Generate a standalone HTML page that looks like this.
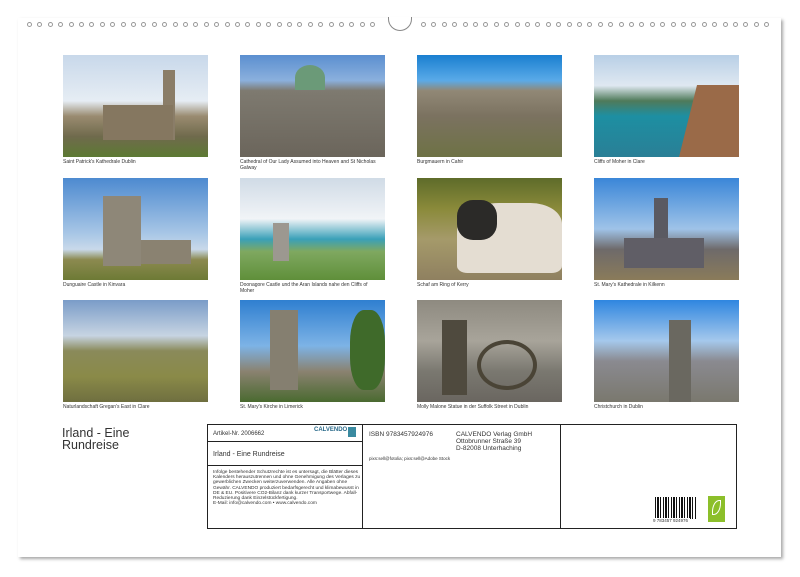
<!DOCTYPE html>
<html><head><meta charset="utf-8"><style>
*{margin:0;padding:0;box-sizing:border-box}
body{width:800px;height:577px;background:#fff;position:relative;overflow:hidden;font-family:"Liberation Sans",sans-serif;color:#333}
.sheet{position:absolute;left:18px;top:18px;width:763px;height:539px;background:#fff;box-shadow:2px 2px 3px rgba(0,0,0,.35)}
.rings{position:absolute;top:22px;left:26px;width:750px;height:8px;font-size:7px;letter-spacing:0;color:#888;white-space:nowrap}
.ring{position:absolute;top:22px;width:5px;height:5px;border:1px solid #999;border-radius:50%}
.notch{position:absolute;left:388px;top:17px;width:24px;height:14px;border:1px solid #888;border-top:none;border-radius:0 0 12px 12px;background:#fff}
.p{position:absolute;width:145px;height:102px;overflow:hidden}
.c{position:absolute;width:150px;font-size:5px;line-height:5.5px;color:#333}
.ttl{position:absolute;left:62px;top:427px;font-size:12.5px;line-height:12px;color:#333}
.box{position:absolute;border:1.2px solid #222}
.t{position:absolute;font-size:6.5px;color:#333}
</style></head><body>
<div class="sheet"></div>
<div id="rings"></div>
<div class="notch"></div>

<!-- row 1 -->
<div class="p" style="left:63px;top:55px;background:linear-gradient(#c8d8ea 0%,#e6edf4 45%,#9a8b70 60%,#6f6a4c 80%,#5d7a33 100%)"><div style="position:absolute;left:100px;top:15px;width:12px;height:70px;background:#8a7d68"></div><div style="position:absolute;left:40px;top:50px;width:70px;height:35px;background:#857760"></div></div>
<div class="p" style="left:240px;top:55px;background:linear-gradient(#5b8fd0 0%,#8bb0dd 25%,#7e7a70 35%,#6b655b 100%)"><div style="position:absolute;left:55px;top:10px;width:30px;height:25px;background:#6b9a78;border-radius:50% 50% 0 0"></div></div>
<div class="p" style="left:417px;top:55px;background:linear-gradient(#1a7fd0 0%,#5aaae8 25%,#918876 35%,#7b7260 60%,#6e7245 100%)"></div>
<div class="p" style="left:594px;top:55px;background:linear-gradient(#b8cfe6 0%,#dfe8f1 30%,#4f7a5a 45%,#1d8fa2 60%,#2a7f96 100%)"><div style="position:absolute;left:85px;top:30px;width:60px;height:72px;background:#9a6a48;clip-path:polygon(30% 0,100% 0,100% 100%,0 100%)"></div></div>
<div class="c" style="left:63px;top:160px">Saint Patrick's Kathedrale Dublin</div>
<div class="c" style="left:240px;top:160px">Cathedral of Our Lady Assumed into Heaven and St Nicholas<br>Galway</div>
<div class="c" style="left:417px;top:160px">Burgmauern in Cahir</div>
<div class="c" style="left:594px;top:160px">Cliffs of Moher in Clare</div>

<!-- row 2 -->
<div class="p" style="left:63px;top:178px;background:linear-gradient(#4d8ad0 0%,#a9c7e6 55%,#c9d9ea 70%,#8c8a50 80%,#6d7a35 100%)"><div style="position:absolute;left:40px;top:18px;width:38px;height:70px;background:#8e8778"></div><div style="position:absolute;left:78px;top:62px;width:50px;height:24px;background:#8a8271"></div></div>
<div class="p" style="left:240px;top:178px;background:linear-gradient(#d0dbe6 0%,#f1f4f7 40%,#3aa0b8 60%,#7fa860 72%,#5f8f3a 100%)"><div style="position:absolute;left:33px;top:45px;width:16px;height:38px;background:#9c9890"></div></div>
<div class="p" style="left:417px;top:178px;background:linear-gradient(#5e6b2a 0%,#8a8a3a 30%,#a59a6a 60%,#8f8060 100%)"><div style="position:absolute;left:40px;top:25px;width:105px;height:70px;background:#e4ddd2;border-radius:40% 30% 10% 10%"></div><div style="position:absolute;left:40px;top:22px;width:40px;height:40px;background:#2b2a28;border-radius:40%"></div></div>
<div class="p" style="left:594px;top:178px;background:linear-gradient(#3a86d8 0%,#9fc3e8 50%,#6e6a6a 70%,#8a7b5a 100%)"><div style="position:absolute;left:60px;top:20px;width:14px;height:70px;background:#5a5a62"></div><div style="position:absolute;left:30px;top:60px;width:80px;height:30px;background:#605e66"></div></div>
<div class="c" style="left:63px;top:283px">Dunguaire Castle in Kinvara</div>
<div class="c" style="left:240px;top:283px">Doonagore Castle und the Aran Islands nahe den Cliffs of<br>Moher</div>
<div class="c" style="left:417px;top:283px">Schaf am Ring of Kerry</div>
<div class="c" style="left:594px;top:283px">St. Mary's Kathedrale in Kilkenn</div>

<!-- row 3 -->
<div class="p" style="left:63px;top:300px;background:linear-gradient(#7a9cc8 0%,#c7d4e2 35%,#8a8a5a 50%,#8a8a48 75%,#6f6f40 100%)"></div>
<div class="p" style="left:240px;top:300px;background:linear-gradient(#2f7fd0 0%,#7db3e6 45%,#8a8270 70%,#4a6a30 100%)"><div style="position:absolute;left:30px;top:10px;width:28px;height:80px;background:#857f70"></div><div style="position:absolute;left:110px;top:10px;width:35px;height:80px;background:#3f6a2a;border-radius:40%"></div></div>
<div class="p" style="left:417px;top:300px;background:linear-gradient(#8e8a80 0%,#a8a49a 40%,#7a7870 70%,#6a6660 100%)"><div style="position:absolute;left:25px;top:20px;width:25px;height:75px;background:#4f4a3e"></div><div style="position:absolute;left:60px;top:40px;width:60px;height:50px;border:4px solid #4a4436;border-radius:50%"></div></div>
<div class="p" style="left:594px;top:300px;background:linear-gradient(#2f86e0 0%,#a5c8ec 40%,#8a8a90 60%,#7a786e 100%)"><div style="position:absolute;left:75px;top:20px;width:22px;height:82px;background:#6a6860"></div></div>
<div class="c" style="left:63px;top:405px">Naturlandschaft Gregan's East in Clare</div>
<div class="c" style="left:240px;top:405px">St. Mary's Kirche in Limerick</div>
<div class="c" style="left:417px;top:405px">Molly Malone Statue in der Suffolk Street in Dublin</div>
<div class="c" style="left:594px;top:405px">Christchurch in Dublin</div>

<div class="ttl">Irland - Eine<br>Rundreise</div>

<div class="box" style="left:207px;top:424px;width:530px;height:105px"></div>
<div class="box" style="left:207px;top:424px;width:156px;height:105px"></div>
<div class="box" style="left:560px;top:424px;width:1px;height:105px;border-width:0 0 0 1.2px"></div>
<div class="box" style="left:207px;top:441px;width:156px;height:1px;border-width:1.2px 0 0 0"></div>
<div class="box" style="left:207px;top:465px;width:156px;height:1px;border-width:1.2px 0 0 0"></div>
<div class="t" style="left:213px;top:431px;font-size:6px">Artikel-Nr. 2006662</div>
<div class="t" style="left:314px;top:427px;font-size:6px;color:#2a6a8a;font-weight:bold">CALVENDO</div>
<div style="position:absolute;left:348px;top:427px;width:8px;height:10px;background:#3a8aa0"></div>
<div class="t" style="left:213px;top:451px;font-size:7px">Irland - Eine Rundreise</div>
<div class="t" style="left:213px;top:470px;font-size:4.8px;line-height:5.2px;width:150px">Infolge bestehender Schutzrechte ist es untersagt, die Blätter dieses Kalenders herauszutrennen und ohne Genehmigung des Verlages zu gewerblichen Zwecken weiterzuverwenden. Alle Angaben ohne Gewähr. CALVENDO produziert bedarfsgerecht und klimabewusst in DE &amp; EU. Positivere CO2-Bilanz dank kurzer Transportwege. Abfall-Reduzierung dank Einzelstückfertigung.<br>E-Mail: info@calvendo.com • www.calvendo.com</div>
<div class="t" style="left:369px;top:431px">ISBN 9783457924976</div>
<div class="t" style="left:456px;top:431px;line-height:7px">CALVENDO Verlag GmbH<br>Ottobrunner Straße 39<br>D-82008 Unterhaching</div>
<div class="t" style="left:369px;top:456px;font-size:4.5px">pixs:sell@fotolia; pixs:sell@Adobe Stock</div>
<div style="position:absolute;left:655px;top:497px;width:42px;height:22px;background:repeating-linear-gradient(90deg,#111 0 1px,#fff 1px 2px,#111 2px 4px,#fff 4px 5px,#111 5px 6px,#fff 6px 8px)"></div>
<div class="t" style="left:651px;top:518px;font-size:4.5px;background:#fff;padding:0 2px">9 783457 924976</div>
<div style="position:absolute;left:708px;top:496px;width:17px;height:26px;background:#8cbf2a"><div style="position:absolute;left:4px;top:4px;width:9px;height:15px;border:1.5px solid #fff;border-radius:80% 0 80% 0"></div></div>

<script>
var r=document.getElementById('rings'),h='';
for(var i=0;i<34;i++){h+='<div class="ring" style="left:'+(27+i*10.4)+'px"></div>';}
for(var i=0;i<34;i++){h+='<div class="ring" style="left:'+(421+i*10.4)+'px"></div>';}
r.innerHTML=h;
</script>
</body></html>
